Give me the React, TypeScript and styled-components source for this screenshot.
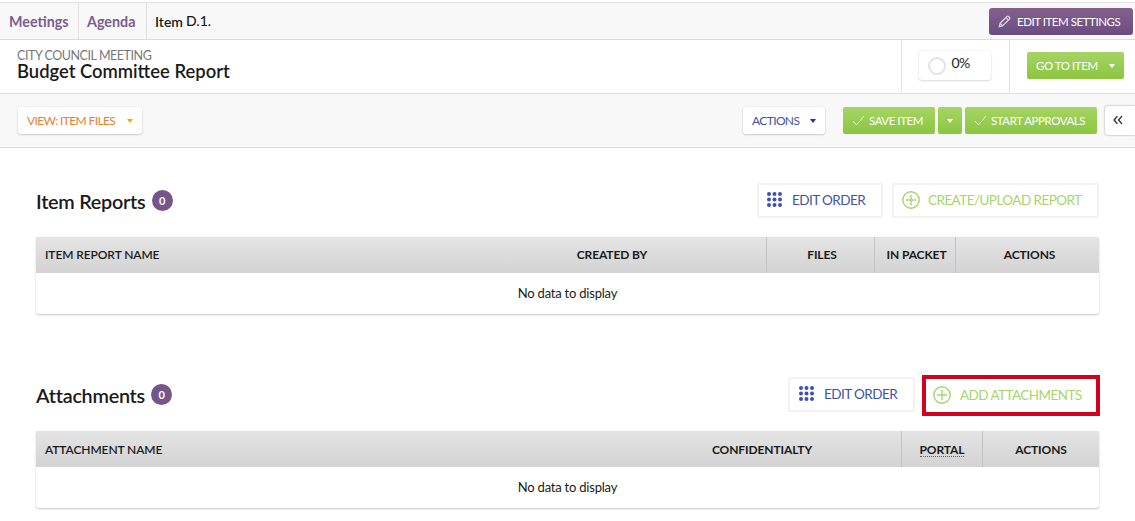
import React from 'react';
import styled, { createGlobalStyle } from 'styled-components';

const GlobalStyle = createGlobalStyle`
  html, body {
    margin: 0;
    background: #fff;
    color: #1a1a1a;
    font-family: 'Lato', 'Liberation Sans', sans-serif;
    overflow: hidden;
  }
  * { box-sizing: border-box; }
`;

const Page = styled.div`
  width: 1135px;
  height: 521px;
  padding-top: 2px;
  overflow: hidden;
`;

const NavBar = styled.div`
  height: 38px;
  display: flex;
  align-items: stretch;
  justify-content: space-between;
  background: #f8f8f8;
  border-top: 1px solid #e2e2e2;
  border-bottom: 1px solid #dcdcdc;
  padding: 0 2px 0 1px;
`;

const Crumbs = styled.div`
  display: flex;
`;

const Crumb = styled.div<{ $w: number }>`
  width: ${(p) => p.$w}px;
  display: flex;
  align-items: center;
  padding-left: 8px;
  font-size: 14.3px;
  font-weight: 700;
  color: #7b5c92;
  border-right: 1px solid #e0e0e0;
`;

const CurrentCrumb = styled.div`
  display: flex;
  align-items: center;
  gap: 3px;
  padding-left: 8px;
  font-size: 14px;
  font-weight: 600;
  color: #1a1a1a;
`;

const CrumbRef = styled.span`
  padding-bottom: 2px;
  font-weight: 500;
  font-size: 14px;
`;

const SettingsButton = styled.button`
  align-self: center;
  height: 27px;
  width: 144px;
  display: flex;
  align-items: center;
  gap: 6px;
  padding: 0 0 0 9px;
  border: none;
  border-radius: 3px;
  background: linear-gradient(#85608f, #694d7f);
  color: #fff;
  font: 400 11.5px 'Lato', sans-serif;
  letter-spacing: -0.45px;
`;

const TitleRow = styled.div`
  height: 54px;
  display: flex;
  justify-content: space-between;
  background: #fff;
  border-bottom: 1px solid #dcdcdc;
`;

const TitleBlock = styled.div`
  padding: 9px 0 0 17px;
`;

const Eyebrow = styled.div`
  font-size: 12.5px;
  line-height: 13px;
  letter-spacing: -0.45px;
  color: #777;
`;

const Title = styled.div`
  font-size: 18.4px;
  line-height: 18px;
  font-weight: 600;
  color: #1a1a1a;
`;

const TitleCells = styled.div`
  display: flex;
  align-items: stretch;
`;

const TitleCell = styled.div<{ $w: number; $pl?: number; $pr?: number }>`
  width: ${(p) => p.$w}px;
  display: flex;
  align-items: center;
  justify-content: center;
  border-left: 1px solid #e2e2e2;
  padding: 0 ${(p) => p.$pr ?? 0}px 2px ${(p) => p.$pl ?? 0}px;
`;

const ProgressBox = styled.div`
  width: 72px;
  height: 29px;
  display: flex;
  align-items: center;
  gap: 6px;
  padding-left: 9px;
  background: #fff;
  border-radius: 3px;
  box-shadow: 0 0 2px rgba(0, 0, 0, 0.12), 0 1px 2px rgba(0, 0, 0, 0.12);
`;

const ProgressValue = styled.span`
  padding-bottom: 6px;
  font-size: 14px;
  letter-spacing: -0.6px;
  color: #222;
`;

const Ring = styled.span`
  width: 18px;
  height: 18px;
  border: 2px solid #e2e2e2;
  border-radius: 50%;
`;

const Toolbar = styled.div`
  height: 54px;
  display: flex;
  align-items: center;
  justify-content: space-between;
  padding: 0 0 0 18px;
  background: #f8f8f8;
  border-bottom: 1px solid #dcdcdc;
`;

const ToolGroup = styled.div`
  display: flex;
  align-items: center;
`;

const WhiteDrop = styled.button<{ $color: string; $w: number }>`
  width: ${(p) => p.$w}px;
  height: 27px;
  display: flex;
  align-items: center;
  justify-content: space-between;
  padding: 0 9px;
  border: none;
  border-radius: 3px;
  background: #fff;
  box-shadow: 0 0 2px rgba(0, 0, 0, 0.1), 0 1px 2px rgba(0, 0, 0, 0.16);
  color: ${(p) => p.$color};
  font: 400 12px 'Lato', sans-serif;
  letter-spacing: -0.62px;
`;

const Caret = styled.span<{ $color: string }>`
  width: 0;
  height: 0;
  border-left: 3.5px solid transparent;
  border-right: 3.5px solid transparent;
  border-top: 4px solid ${(p) => p.$color};
`;

const GreenButton = styled.button<{ $w: number; $ml?: number; $mode?: 'center' | 'start' | 'split' }>`
  width: ${(p) => p.$w}px;
  height: 27px;
  margin-left: ${(p) => p.$ml ?? 0}px;
  display: flex;
  align-items: center;
  justify-content: ${(p) => (p.$mode === 'split' ? 'space-between' : p.$mode === 'start' ? 'flex-start' : 'center')};
  gap: 4px;
  padding: 0 ${(p) => (p.$mode === 'split' ? '9px' : '0')} 0 ${(p) => (p.$mode && p.$mode !== 'center' ? '9px' : '0')};
  border: none;
  border-radius: 2px;
  background: linear-gradient(#a5d465, #8cc63f);
  color: #fff;
  font: 400 11.5px 'Lato', sans-serif;
  letter-spacing: -0.45px;
`;

const CollapseButton = styled.button`
  width: 30px;
  height: 29px;
  margin-left: 8px;
  padding: 0 4px 0 0;
  border: none;
  border-radius: 3px 0 0 3px;
  background: #fff;
  box-shadow: 0 0 2px rgba(0, 0, 0, 0.45);
`;

const Section = styled.section<{ $top: number }>`
  margin: ${(p) => p.$top}px 36px 0 36px;
`;

const SectionHead = styled.div`
  height: 35px;
  display: flex;
  align-items: center;
  justify-content: space-between;
`;

const Heading = styled.div`
  display: flex;
  align-items: center;
  gap: 6px;
  font-size: 19.8px;
  font-weight: 600;
  letter-spacing: -0.25px;
  color: #1a1a1a;
`;

const CountBadge = styled.span`
  width: 21px;
  height: 21px;
  display: flex;
  align-items: center;
  justify-content: center;
  border-radius: 50%;
  background: #76568a;
  color: #fff;
  font-size: 11px;
  font-weight: 700;
`;

const HeadActions = styled.div`
  display: flex;
  align-items: center;
  gap: 9px;
`;

const OutlineButton = styled.button<{ $w: number; $color: string; $gap: number; $pl: number }>`
  width: ${(p) => p.$w}px;
  height: 35px;
  display: flex;
  align-items: center;
  gap: ${(p) => p.$gap}px;
  padding: 0 0 2px ${(p) => p.$pl}px;
  background: #fff;
  border: 2px solid #f2f2f2;
  border-radius: 2px;
  color: ${(p) => p.$color};
  font: 400 13.5px 'Lato', sans-serif;
  letter-spacing: -0.55px;
`;

/* the red box is an annotation drawn over the page, so it overhangs the row */
const FlaggedButton = styled(OutlineButton)`
  height: 41px;
  margin: -2px -1px -4px -2px;
  padding-bottom: 2px;
  border: 4px solid #d0021f;
  border-radius: 0;
`;

const Table = styled.div`
  margin-top: 19px;
  border-radius: 3px;
  background: #fff;
  box-shadow: 0 1px 2px rgba(0, 0, 0, 0.22), 0 0 1px rgba(0, 0, 0, 0.06);
`;

const HeaderRow = styled.div<{ $cols: string }>`
  height: 36px;
  display: grid;
  grid-template-columns: ${(p) => p.$cols};
  background: linear-gradient(#e4e4e4, #d3d3d3);
`;

const HeaderCell = styled.div<{ $left?: boolean; $divider?: boolean; $nudge?: number; $low?: boolean }>`
  display: flex;
  align-items: center;
  justify-content: ${(p) => (p.$left ? 'flex-start' : 'center')};
  padding: ${(p) => (p.$low ? 1 : 0)}px 0 ${(p) => (p.$low ? 0 : 1)}px ${(p) => (p.$left ? 9 : p.$nudge ?? 0)}px;
  border-left: ${(p) => (p.$divider ? '1px solid #c2c2c2' : 'none')};
  font-size: 12px;
  font-weight: ${(p) => (p.$left ? 600 : 700)};
  letter-spacing: -0.1px;
  color: #1a1a1a;
`;

const DottedLabel = styled.span`
  border-bottom: 1px dotted #6b4f80;
  line-height: 13px;
`;

const EmptyRow = styled.div`
  height: 41px;
  display: flex;
  align-items: center;
  justify-content: center;
  padding-bottom: 2px;
  font-size: 13px;
  letter-spacing: -0.22px;
  color: #1a1a1a;
`;

const Pencil = () => (
  <svg width="13" height="13" viewBox="0 0 12 12" fill="none" stroke="#d9cfe0" strokeWidth="1.2">
    <path d="M1.2 10.8l.7-3L8.3 1.4a1 1 0 0 1 1.4 0l.9.9a1 1 0 0 1 0 1.4L4.2 10.1z" />
    <path d="M7.4 2.4l2.2 2.2M2 7.8l2.2 2.2" />
  </svg>
);

const Check = () => (
  <svg width="13" height="11" viewBox="0 0 13 11" fill="none" stroke="#e4f2d0" strokeWidth="1">
    <path d="M1 6l3.5 4L12 1" />
  </svg>
);

const GripDots = () => (
  <svg width="15" height="15" viewBox="0 0 15 15" fill="#3f51ad">
    {[2, 7.5, 13].map((y) =>
      [2, 7.5, 13].map((x) => <circle key={`${x}-${y}`} cx={x} cy={y} r="2" />)
    )}
  </svg>
);

const PlusCircle = () => (
  <svg width="18" height="18" viewBox="0 0 18 18" fill="none" stroke="#a6d56b" strokeWidth="1.4">
    <circle cx="9" cy="9" r="8.2" />
    <path d="M9 4v10M4 9h10" />
  </svg>
);

const Chevrons = () => (
  <svg width="10" height="10" viewBox="0 0 9 9" fill="none" stroke="#333" strokeWidth="1.3">
    <path d="M4 1L1 4.5 4 8M8 1L5 4.5 8 8" />
  </svg>
);

const App: React.FC = () => {
  return (
    <>
      <GlobalStyle />
      <Page>
        <NavBar>
          <Crumbs>
            <Crumb $w={78}>Meetings</Crumb>
            <Crumb $w={68}>Agenda</Crumb>
            <CurrentCrumb>
              Item
              <CrumbRef>D.1.</CrumbRef>
            </CurrentCrumb>
          </Crumbs>
          <SettingsButton>
            <Pencil />
            EDIT ITEM SETTINGS
          </SettingsButton>
        </NavBar>

        <TitleRow>
          <TitleBlock>
            <Eyebrow>CITY COUNCIL MEETING</Eyebrow>
            <Title>Budget Committee Report</Title>
          </TitleBlock>
          <TitleCells>
            <TitleCell $w={108} $pr={2}>
              <ProgressBox>
                <Ring />
                <ProgressValue>0%</ProgressValue>
              </ProgressBox>
            </TitleCell>
            <TitleCell $w={126} $pl={6}>
              <GreenButton $w={97} $mode="split">
                GO TO ITEM
                <Caret $color="#fff" />
              </GreenButton>
            </TitleCell>
          </TitleCells>
        </TitleRow>

        <Toolbar>
          <WhiteDrop $w={124} $color="#ee7d31">
            VIEW: ITEM FILES
            <Caret $color="#ffa500" />
          </WhiteDrop>
          <ToolGroup>
            <WhiteDrop $w={82} $color="#3f51ad">
              ACTIONS
              <Caret $color="#1c2fc4" />
            </WhiteDrop>
            <GreenButton $w={92} $ml={18} $mode="start">
              <Check />
              SAVE ITEM
            </GreenButton>
            <GreenButton $w={24} $ml={3}>
              <Caret $color="#fff" />
            </GreenButton>
            <GreenButton $w={132} $ml={3} $mode="start">
              <Check />
              START APPROVALS
            </GreenButton>
            <CollapseButton>
              <Chevrons />
            </CollapseButton>
          </ToolGroup>
        </Toolbar>

        <Section $top={35}>
          <SectionHead>
            <Heading>
              Item Reports
              <CountBadge>0</CountBadge>
            </Heading>
            <HeadActions>
              <OutlineButton $w={126} $color="#3f51ad" $gap={10} $pl={8}>
                <GripDots />
                EDIT ORDER
              </OutlineButton>
              <OutlineButton $w={207} $color="#a6d56b" $gap={8} $pl={8}>
                <PlusCircle />
                CREATE/UPLOAD REPORT
              </OutlineButton>
            </HeadActions>
          </SectionHead>
          <Table>
            <HeaderRow $cols="422px 308px 108px 81px 1fr">
              <HeaderCell $left>ITEM REPORT NAME</HeaderCell>
              <HeaderCell>CREATED BY</HeaderCell>
              <HeaderCell $divider $nudge={3}>FILES</HeaderCell>
              <HeaderCell $divider $nudge={3}>IN PACKET</HeaderCell>
              <HeaderCell $divider $nudge={4}>ACTIONS</HeaderCell>
            </HeaderRow>
            <EmptyRow>No data to display</EmptyRow>
          </Table>
        </Section>

        <Section $top={63}>
          <SectionHead>
            <Heading>
              Attachments
              <CountBadge>0</CountBadge>
            </Heading>
            <HeadActions>
              <OutlineButton $w={127} $color="#3f51ad" $gap={10} $pl={9}>
                <GripDots />
                EDIT ORDER
              </OutlineButton>
              <FlaggedButton $w={178} $color="#a6d56b" $gap={9} $pl={7}>
                <PlusCircle />
                ADD ATTACHMENTS
              </FlaggedButton>
            </HeadActions>
          </SectionHead>
          <Table>
            <HeaderRow $cols="587px 278px 81px 1fr">
              <HeaderCell $left $low>ATTACHMENT NAME</HeaderCell>
              <HeaderCell $low>CONFIDENTIALTY</HeaderCell>
              <HeaderCell $divider $low>
                <DottedLabel>PORTAL</DottedLabel>
              </HeaderCell>
              <HeaderCell $divider $low>ACTIONS</HeaderCell>
            </HeaderRow>
            <EmptyRow>No data to display</EmptyRow>
          </Table>
        </Section>
      </Page>
    </>
  );
};

export default App;
